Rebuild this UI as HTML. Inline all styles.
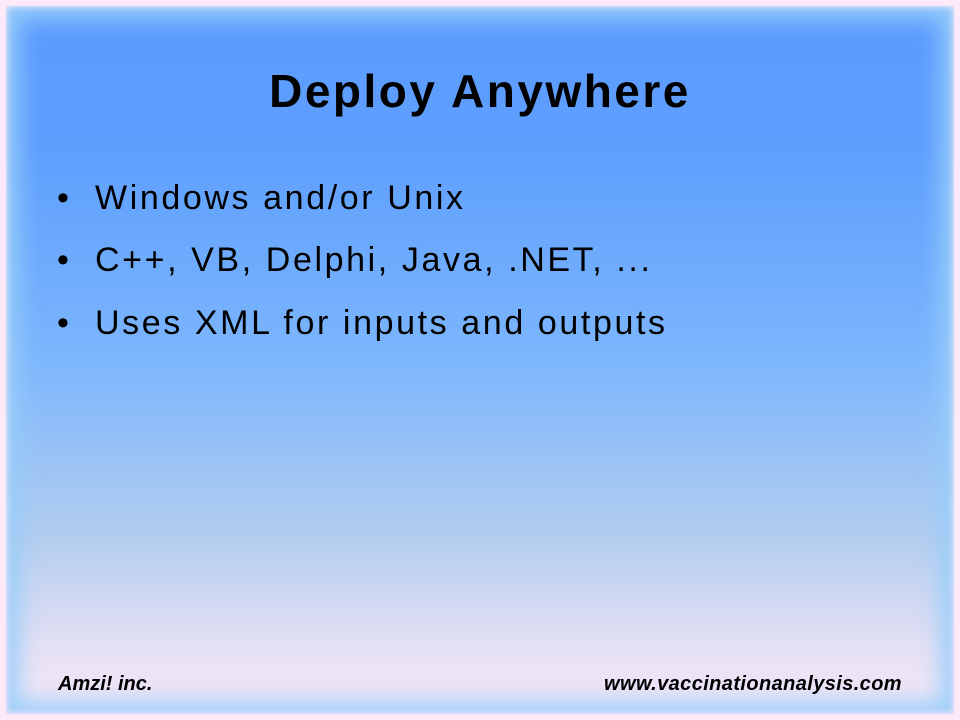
<!DOCTYPE html>
<html><head><style>
html,body{margin:0;padding:0}
body{width:960px;height:720px;position:relative;overflow:hidden;background:#fde9f8;font-family:"Liberation Sans",sans-serif;}
.bg{position:absolute;left:6px;top:6px;right:6px;bottom:6px;
background:linear-gradient(to bottom,#5b9bfe 0%,#5e9ffe 20%,#7db6fd 50%,#b3cdef 75%,#e3e0f4 90%,#fbe8f8 100%);
box-shadow:inset 0 0 22px 14px rgba(150,205,250,0.9);filter:blur(0.5px)}
.edge{position:absolute;left:0;top:0;right:0;bottom:0;box-shadow:inset 0 0 8px 6px #fde9f8}
h1{position:absolute;left:0;width:960px;top:64px;margin:0;text-align:center;font-size:46px;letter-spacing:2.5px;font-weight:bold;color:#000}
ul{position:absolute;left:0;top:179px;margin:0;padding:0;list-style:none}
li{position:absolute;left:95px;white-space:nowrap;font-size:34px;letter-spacing:2.6px;color:#000}
li:before{content:"•";position:absolute;left:-38px;letter-spacing:0}
.f{position:absolute;top:673px;font-size:20px;font-weight:bold;font-style:italic}
</style></head><body>
<div class="bg"></div><div class="edge"></div>
<h1>Deploy Anywhere</h1>
<ul>
<li style="top:0px">Windows and/or Unix</li>
<li style="top:62px">C++, VB, Delphi, Java, .NET, ...</li>
<li style="top:125px">Uses XML for inputs and outputs</li>
</ul>
<div class="f" style="left:58px">Amzi! inc.</div>
<div class="f" style="right:58px;letter-spacing:0.4px">www.vaccinationanalysis.com</div>
</body></html>
